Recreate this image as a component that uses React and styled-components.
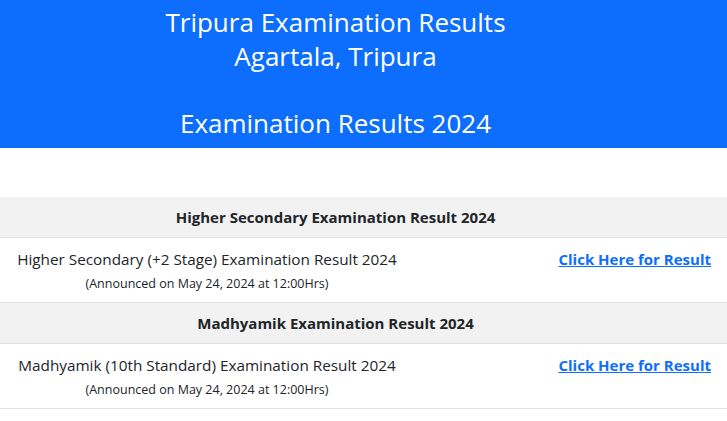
import { Fragment } from "react"
import styled, { createGlobalStyle } from "styled-components"

const Global = createGlobalStyle`
  *, *::before, *::after { box-sizing: border-box; }
  body {
    margin: 0;
    background: #fff;
    font-family: "Open Sans", "Noto Sans", sans-serif;
    color: #212529;
  }
`

const Banner = styled.header`
  background: #0d6efd;
  color: #fff;
  text-align: center;
  height: 148px;
  padding: 6px 56px 0 0;
  font-size: 26px;
  line-height: 33.5px;
`

const BannerLine = styled.div`
  min-height: 33.5px;
`

const Results = styled.section`
  margin-top: 49px;
  display: grid;
  grid-template-columns: 414px 1fr;
`

const GroupTitle = styled.div`
  grid-column: 1 / -1;
  background: #f2f2f2;
  height: 41px;
  display: flex;
  align-items: center;
  justify-content: center;
  padding-right: 56px;
  font-weight: 700;
  font-size: 15px;
  border-bottom: 1px solid #dee2e6;
`

const Cell = styled.div`
  height: 65px;
  border-bottom: 1px solid #dee2e6;
  display: flex;
  flex-direction: column;
  justify-content: flex-start;
  align-items: ${(p) => (p.$right ? "flex-end" : "center")};
  padding: 10px ${(p) => (p.$right ? "16px" : "0")} 0 0;
`

const Title = styled.div`
  font-size: 15.3px;
  line-height: 22px;
`

const Note = styled.div`
  font-size: 12.5px;
  line-height: 18px;
  margin-top: 5px;
`

const Link = styled.a`
  color: #0d6efd;
  font-weight: 700;
  font-size: 15px;
  line-height: 22px;
  text-decoration: underline;
`

const groups = [
  {
    head: "Higher Secondary Examination Result 2024",
    title: "Higher Secondary (+2 Stage) Examination Result 2024",
  },
  {
    head: "Madhyamik Examination Result 2024",
    title: "Madhyamik (10th Standard) Examination Result 2024",
  },
]

export default function App() {
  return (
    <>
      <Global />
      <Banner>
        <BannerLine>Tripura Examination Results</BannerLine>
        <BannerLine>Agartala, Tripura</BannerLine>
        <BannerLine />
        <BannerLine>Examination Results 2024</BannerLine>
      </Banner>
      <Results>
        {groups.map((g) => (
          <Fragment key={g.head}>
            <GroupTitle>{g.head}</GroupTitle>
            <Cell>
              <Title>{g.title}</Title>
              <Note>(Announced on May 24, 2024 at 12:00Hrs)</Note>
            </Cell>
            <Cell $right>
              <Link href="#">Click Here for Result</Link>
            </Cell>
          </Fragment>
        ))}
      </Results>
    </>
  )
}
